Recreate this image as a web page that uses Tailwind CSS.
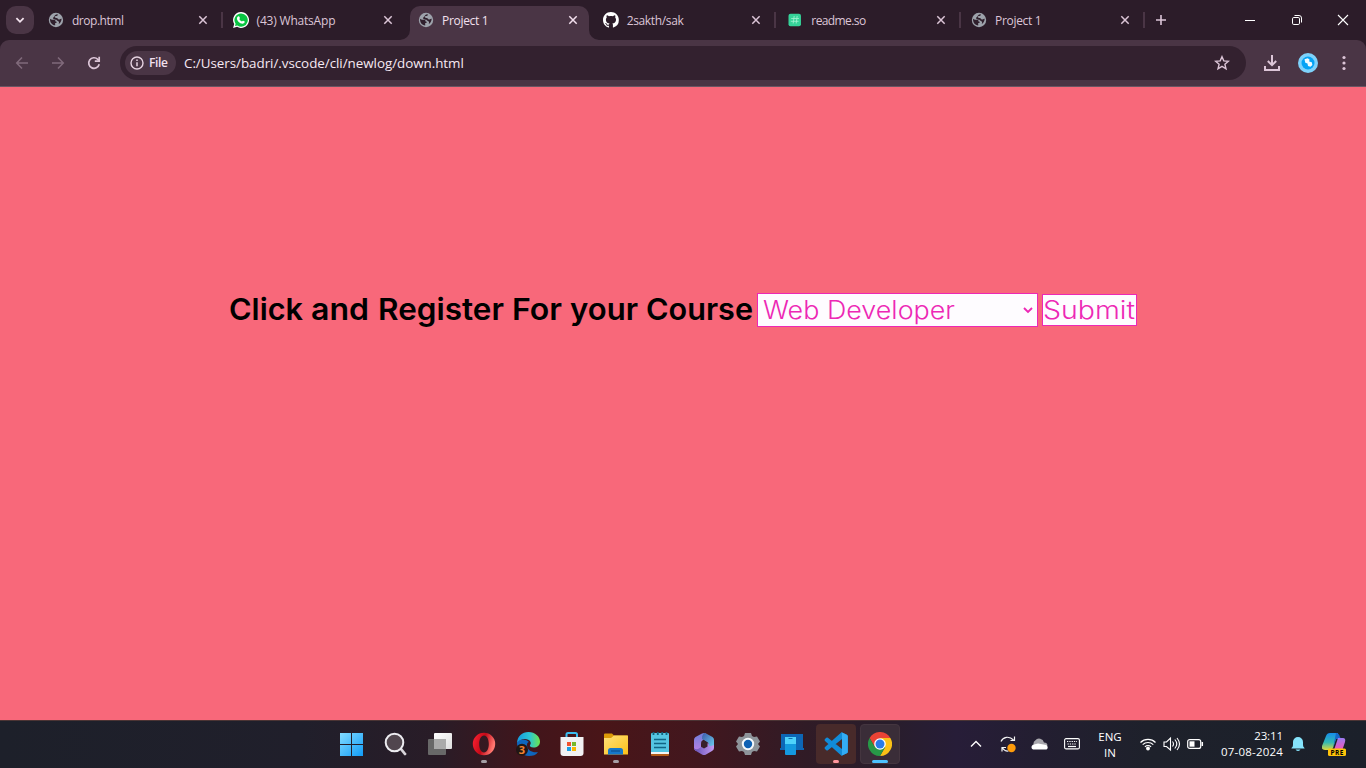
<!DOCTYPE html>
<html lang="en">
<head>
<meta charset="utf-8">
<title>Project 1</title>
<script src="https://cdn.jsdelivr.net/npm/@tailwindcss/browser@4"></script>
</head>
<body class="w-[1366px] h-[768px] overflow-hidden flex flex-col bg-[#f8687a] font-['Open_Sans','Noto_Sans',sans-serif]">
<svg class="hidden">
  <symbol id="globe" viewBox="0 0 16 16"><circle cx="8" cy="8" r="7.2" fill="#9da2ab"/><path d="M2 6.700C3.300 8 4.600 7.600 6 7.700c1.200.1 1.700.9 1.500 1.900l1.200.1c.3 1-.5 1.500-1.500 1.400v2.300C4 13 1.800 10.500 2 6.700ZM9.800 2.300c.1 1-.3 1.600-1.300 1.600-1.400-.1-1.800.5-1.600 1.300.7 1 1.600.4 2.600 1 .5.7 1 1.400 2 1.200.8-.1 1.300-.7 2.200-.7-.2 2.700-1.300 4.500-3 5.400.8-1.500.3-2.600-.7-3-.8-.3-1.300-.6-1.500-1.300-1-.2-2.300-.1-3.200-1.100-.6-.7.1-1.400.9-1.600.2-1.200.9-2.100 1.900-2.700Z" fill="#30202d"/></symbol>
  <symbol id="x" viewBox="0 0 10 10"><path d="M1.300 1.300 8.700 8.700M8.700 1.300 1.300 8.700" stroke="currentColor" stroke-width="1.500" fill="none"/></symbol>
</svg>

<header class="h-[87px] shrink-0 bg-[#2c1c29] text-[#dcc5d7]">
  <div class="h-10 flex items-center">
    <div class="ml-1.5 w-7 h-7 rounded-[10px] bg-[#4a3545] flex items-center justify-center"><svg class="w-2.5 h-2.5" viewBox="0 0 10 10"><path d="m1.400 3.200 3.600 3.600 3.600-3.600" stroke="#f3e3ee" stroke-width="1.800" fill="none"/></svg></div>
    <div class="ml-1 w-[1110px] h-10 flex text-[12px]">
      <div class="w-[184.6px] flex items-center pl-[10px]"><svg class="w-4 h-4"><use href="#globe"/></svg><span class="ml-2 pt-0.5 w-[127px] whitespace-nowrap tracking-[-.45px]">drop.html</span><svg class="w-2.5 h-2.5"><use href="#x"/></svg><i class="ml-[12.5px] w-0.5 h-4 bg-[#4a3545]"></i></div>
      <div class="w-[184.6px] flex items-center pl-[10px]"><svg class="w-4 h-4" viewBox="0 0 16 16"><path d="M8 .1A7.900 7.900 0 0 0 1.200 12L.1 15.900l4-1.100A7.900 7.900 0 1 0 8 .1Z" fill="#fff"/><path d="M8 1.400a6.600 6.600 0 0 0-5.400 10.300L2 14l2.400-.6A6.600 6.600 0 1 0 8 1.400Z" fill="#08c441"/><path d="M5.400 4.200c.5-.2.8 0 1 .6l.5 1.100c.1.4-.5.9-.6 1.100.5 1.200 1.400 2 2.700 2.600.4-.2.7-.9 1.100-.8l1.600.8c.2.6-.3 2-2 2.100-3.200 0-6.200-3.400-5.700-5.700.1-.8.7-1.500 1.400-1.800Z" fill="#fff"/></svg><span class="ml-2 pt-0.5 w-[126px] whitespace-nowrap tracking-[-.2px]">(43) WhatsApp</span><svg class="w-2.5 h-2.5"><use href="#x"/></svg></div>
      <div class="w-[184.6px] flex items-end"><div class="ml-[2.8px] w-[179px] h-[34px] bg-[#4a3545] rounded-t-[10px] relative flex items-center pb-[6px] pl-[8px] text-[#f3e0ee]">
        <svg class="absolute -left-2.5 bottom-0 w-2.5 h-2.5" viewBox="0 0 10 10"><path d="M10 0v10H0A10 10 0 0 0 10 0Z" fill="#4a3545"/></svg><svg class="absolute -right-2.5 bottom-0 w-2.5 h-2.5" viewBox="0 0 10 10"><path d="M0 0v10h10A10 10 0 0 1 0 0Z" fill="#4a3545"/></svg>
        <svg class="w-4 h-4"><use href="#globe"/></svg><span class="ml-2 pt-0.5 w-[126px] whitespace-nowrap tracking-[-.3px]">Project 1</span><svg class="w-2.5 h-2.5"><use href="#x"/></svg></div></div>
      <div class="w-[184.6px] flex items-center pl-[11px]"><svg class="w-4 h-4" viewBox="0 0 16 16" fill="#fff"><path d="M8 0C3.580 0 0 3.580 0 8c0 3.540 2.290 6.530 5.470 7.590.4.070.55-.17.55-.38 0-.19-.01-.82-.01-1.490-2.010.37-2.530-.49-2.690-.94-.09-.23-.48-.94-.82-1.130-.28-.15-.68-.52-.01-.53.63-.01 1.080.58 1.230.82.72 1.210 1.870.87 2.330.66.070-.52.28-.87.51-1.070-1.780-.2-3.640-.89-3.640-3.950 0-.87.31-1.590.82-2.150-.08-.2-.36-1.020.08-2.120 0 0 .67-.21 2.200.82.64-.18 1.320-.27 2-.27s1.360.09 2 .27c1.530-1.040 2.200-.82 2.200-.82.44 1.100.16 1.920.08 2.120.51.56.82 1.270.82 2.150 0 3.070-1.870 3.750-3.650 3.950.29.25.54.73.54 1.480 0 1.070-.01 1.930-.01 2.200 0 .21.15.46.55.38A8.010 8.010 0 0 0 16 8c0-4.420-3.580-8-8-8Z"/></svg><span class="ml-2 pt-0.5 w-[126px] whitespace-nowrap tracking-[-.35px]">2sakth/sak</span><svg class="w-2.5 h-2.5"><use href="#x"/></svg><i class="ml-[13px] w-0.5 h-4 bg-[#4a3545]"></i></div>
      <div class="w-[184.6px] flex items-center pl-[11px]"><svg class="w-4 h-4" viewBox="0 0 16 16"><rect x="1.500" y="1.700" width="12.500" height="12.500" rx="2" fill="#35d399"/><path d="m7.200 4-1 7.500M10.200 4l-1 7.500M4.200 6.500h7.800M3.800 9.300h7.800" stroke="#9af2cf" stroke-width=".9"/></svg><span class="ml-2 pt-0.5 w-[125px] whitespace-nowrap tracking-[-.6px]">readme.so</span><svg class="w-2.5 h-2.5"><use href="#x"/></svg><i class="ml-[13px] w-0.5 h-4 bg-[#4a3545]"></i></div>
      <div class="w-[184.6px] flex items-center pl-[10px]"><svg class="w-4 h-4"><use href="#globe"/></svg><span class="ml-2 pt-0.5 w-[125px] whitespace-nowrap tracking-[-.3px]">Project 1</span><svg class="w-2.5 h-2.5"><use href="#x"/></svg><i class="ml-[13px] w-0.5 h-4 bg-[#4a3545]"></i></div>
    </div>
    <svg class="ml-[7px] w-3 h-3" viewBox="0 0 12 12"><path d="M6 1v10M1 6h10" stroke="#dcc5d7" stroke-width="1.600"/></svg>
    <div class="ml-auto flex items-center mr-[17px] text-white">
      <svg class="w-2.5 h-3" viewBox="0 0 10 12"><path d="M0 6.500h10" stroke="white"/></svg>
      <svg class="w-3 h-3 ml-9 mr-[34px]" viewBox="0 0 12 12" fill="none" stroke="white"><rect x="1.500" y="3.500" width="7" height="7" rx="1.300"/><path d="M3.500 1.500H8a2.500 2.500 0 0 1 2.500 2.500v4.500"/></svg>
      <svg class="w-3 h-3" viewBox="0 0 12 12"><path d="m1 1 10 10M11 1 1 11" stroke="white" stroke-width="1.100"/></svg>
    </div>
  </div>
  <div class="h-[47px] bg-[#4a3545] rounded-t-[9px] border-b border-[#695563] flex items-center">
    <svg class="ml-[15px] w-3.5 h-3.5" viewBox="0 0 14 14" fill="none" stroke="#806a7b" stroke-width="1.500"><path d="M13 7H2M7 1.500 1.700 7 7 12.500"/></svg>
    <svg class="ml-[22px] w-3.5 h-3.5" viewBox="0 0 14 14" fill="none" stroke="#806a7b" stroke-width="1.500"><path d="M1 7h11M7 1.500 12.300 7 7 12.500"/></svg>
    <svg class="ml-[22px] w-3.5 h-3.5" viewBox="0 0 14 14" fill="none" stroke="#dcc5d7" stroke-width="1.700"><path d="M12.200 8.300a5.300 5.300 0 1 1-1.400-5L12 4.500"/><path d="M12.200.8v4.400H7.800"/></svg>
    <div class="ml-[19px] w-[1126px] h-[34px] rounded-full bg-[#33212f] flex items-center pl-[5px]">
      <div class="w-[51px] h-6 rounded-full bg-[#4a3545] flex items-center pl-[5px] text-[12px] font-semibold text-[#f3e0ee]"><svg class="w-3.5 h-3.5 mr-[5px]" viewBox="0 0 14 14"><circle cx="7" cy="7" r="6" fill="none" stroke="#e6d3e1" stroke-width="1.400"/><path d="M7 6.200v4M7 3.500v1.500" stroke="#e6d3e1" stroke-width="1.500"/></svg><span class="tracking-[-.4px]">File</span></div>
      <span class="ml-2 text-[13.4px] leading-5 tracking-[-.04px] text-[#f6e9f3]">C:/Users/badri/.vscode/cli/newlog/down.html</span>
      <svg class="ml-auto mr-4 w-4 h-4" viewBox="0 0 16 16"><path d="m8 1.700 1.800 4.200 4.600.4-3.500 3 1.100 4.500L8 11.400l-4 2.400 1.100-4.500-3.500-3 4.600-.4L8 1.700Z" fill="none" stroke="#dcc5d7" stroke-width="1.400"/></svg>
    </div>
    <svg class="ml-[18px] w-4 h-4" viewBox="0 0 16 16" fill="none" stroke="#dcc5d7" stroke-width="2"><path d="M8 0v10M3.800 6 8 10.200 12.200 6M1 11v4h14v-4"/></svg>
    <svg class="ml-[18px] w-5 h-5" viewBox="0 0 20 20"><circle cx="10" cy="10" r="10" fill="#7ed2fb"/><circle cx="10" cy="10" r="6.500" fill="#04a3f5"/><path d="m6.500 6.200 3.200-1 1.800 1.200-.3 2 2.600.8.600 2.800-1.900 1.800-2.500-.7-.5-2.600-2.200-.8Z" fill="#effaff"/></svg>
    <svg class="ml-6 w-1 h-4" viewBox="0 0 4 16" fill="#dcc5d7"><circle cx="2" cy="2.500" r="1.600"/><circle cx="2" cy="8" r="1.600"/><circle cx="2" cy="13.500" r="1.600"/></svg>
  </div>
</header>

<main class="h-[633px] shrink-0 flex items-start pl-[229px] pt-[206px] text-[#ed28b5]">
  <div class="w-[528px] h-8 flex items-center"><svg class="w-[528px] h-8 overflow-visible fill-black font-semibold text-[30px] font-['Inter']"><text y="26.500"><tspan x="0" textLength="74" lengthAdjust="spacingAndGlyphs">Click</tspan> <tspan x="82" textLength="58" lengthAdjust="spacingAndGlyphs">and</tspan> <tspan x="149" textLength="126" lengthAdjust="spacingAndGlyphs">Register</tspan> <tspan x="283" textLength="50" lengthAdjust="spacingAndGlyphs">For</tspan> <tspan x="341" textLength="68" lengthAdjust="spacingAndGlyphs">your</tspan> <tspan x="417" textLength="107" lengthAdjust="spacingAndGlyphs">Course</tspan></text></svg></div>
  <div class="w-[281px] h-[34px] bg-[#fefcff] border border-[#ed28b5] flex items-center"><svg class="w-[260px] h-8"><text x="5" y="25" textLength="192" lengthAdjust="spacingAndGlyphs" class="fill-[#ed28b5] font-light text-[25px] font-['Inter']">Web Developer</text></svg><svg class="ml-[5px] w-2.5 h-2.5 shrink-0" viewBox="0 0 10 10"><path d="m1 3 4 4 4-4" fill="none" stroke="#ed28b5" stroke-width="1.900"/></svg></div>
  <div class="ml-1 mt-px w-[95px] h-8 bg-[#fefcff] border border-[#ed28b5]"><svg class="w-[93px] h-[30px]"><text x="0" y="24" textLength="92" lengthAdjust="spacingAndGlyphs" class="fill-[#ed28b5] font-light text-[25px] font-['Inter']">Submit</text></svg></div>
</main>

<footer class="h-12 pb-0.5 shrink-0 border-t border-[#4b3434] flex items-center bg-[linear-gradient(90deg,#1d202a_0%,#201f2b_22%,#291c27_32%,#42151b_39%,#491518_44%,#42171e_51%,#301b26_59%,#291d2b_65%,#271d38_70%,#231e31_76%,#1e212b_84%,#1b202a_100%)] text-white">
  <div class="ml-[330px] w-[572px] h-full flex items-center">
    <div class="w-11 flex justify-center"><svg class="w-6 h-6" viewBox="0 0 24 24"><defs><linearGradient id="w" x1="0" y1="0" x2="1" y2="1"><stop stop-color="#83dcff"/><stop offset="1" stop-color="#109cf7"/></linearGradient></defs><path d="M0 1h11v11H0zM12 1h11v11H12zM0 13h11v11H0zM12 13h11v11H12z" fill="url(#w)"/></svg></div>
    <div class="w-11 flex justify-center"><svg class="w-6 h-6" viewBox="0 0 24 24"><path d="m17 17 4 5" stroke="#d8d5da" stroke-width="2.800" stroke-linecap="round"/><circle cx="10.500" cy="10.500" r="8.800" fill="#51464e" stroke="#ececf0" stroke-width="2"/></svg></div>
    <div class="w-11 flex justify-center"><svg class="w-6 h-6" viewBox="0 0 24 24"><defs><linearGradient id="tv" x1="0" x2="1" y2="1"><stop stop-color="#fff"/><stop offset="1" stop-color="#ddd"/></linearGradient></defs><rect x="6" y="1" width="18" height="16" rx="1" fill="url(#tv)"/><rect y="7" width="18" height="16" rx="1" fill="#686868"/><path d="M6 7h12v10H6z" fill="#aaa"/></svg></div>
    <div class="w-11 h-full flex items-center justify-center relative"><svg class="w-6 h-6" viewBox="0 0 24 24"><defs><linearGradient id="op" x2="1" y2=".3"><stop stop-color="#ff2435"/><stop offset=".55" stop-color="#c40917"/><stop offset="1" stop-color="#ff7770"/></linearGradient></defs><path fill-rule="evenodd" d="M12 .8a11.200 11.200 0 1 0 0 22.400A11.200 11.200 0 0 0 12 .8Zm0 2.700c3 0 4.800 3.700 4.800 8.500s-1.800 8.500-4.800 8.500S7.200 16.800 7.200 12 9 3.500 12 3.500Z" fill="url(#op)"/></svg><i class="absolute bottom-[3px] w-1.5 h-[3px] rounded-full bg-[#a69fa5]"></i></div>
    <div class="w-11 flex justify-center"><svg class="w-6 h-6 overflow-visible" viewBox="0 0 24 24"><defs><linearGradient id="ed" x2="1"><stop stop-color="#1599df"/><stop offset=".55" stop-color="#2bc5d3"/><stop offset="1" stop-color="#6ce54c"/></linearGradient></defs><path d="M1 11c0 8 5 13 12 13 4 0 7-1 9-4-5 1-10-1-11-6-.3-3 1-4 2-4C9 6 2 7 1 11Z" fill="#0e65bd"/><path d="M1 11C1.500 4 6 0 12.500 0 19 0 24 4.500 24 9.500c0 4-3 6-6.500 6-3 0-4-1.500-3.500-2.500C16 11 14 7 9 7c-4 0-7 2-8 4Z" fill="url(#ed)"/><circle cx="6" cy="17.800" r="6" fill="#201614"/><text x="2.800" y="22" class="fill-[#f2812e] font-bold text-[11px]">3</text></svg></div>
    <div class="w-11 flex justify-center"><svg class="w-6 h-6" viewBox="0 0 24 24"><path d="M6.500 6V2.500c0-1 .5-1.500 1.500-1.500h7.500c1 0 1.500.5 1.500 1.500V6" fill="none" stroke="#3bbdf0" stroke-width="2"/><path d="M.5 5h23v16c0 2-1 3-3 3h-17c-2 0-3-1-3-3Z" fill="#f1f1f3"/><path fill="#f0522e" d="M7 10h4v4H7z"/><path fill="#77b82b" d="M12 10h4v4h-4z"/><path fill="#199fe5" d="M7 15h4v4H7z"/><path fill="#f8b800" d="M12 15h4v4h-4z"/></svg></div>
    <div class="w-11 h-full flex items-center justify-center relative"><svg class="w-6 h-6" viewBox="0 0 24 24"><defs><linearGradient id="fo" x2="1" y2="1"><stop stop-color="#ffe17a"/><stop offset="1" stop-color="#fbc018"/></linearGradient></defs><path d="M0 2.500q0-1 1-1h7l2 2H24V8H0Z" fill="#dd9b08"/><path d="M0 6h7l3-2.500h13q1 0 1 1V22.500H0Z" fill="url(#fo)"/><path d="M4 22.500v-4q0-2.500 2.500-2.500h10q2.500 0 2.500 2.500v4Z" fill="#1578c9"/><path d="M7 19h9" stroke="#0f5798" stroke-width="1.500"/></svg><i class="absolute bottom-[3px] w-1.5 h-[3px] rounded-full bg-[#a69fa5]"></i></div>
    <div class="w-11 flex justify-center"><svg class="w-6 h-6" viewBox="0 0 24 24"><path d="M3 20h18v3q0 1-1 1H4q-1 0-1-1Z" fill="#b35b18"/><path d="M3 19h18v3H3z" fill="#f4f4f4"/><path d="M3 2q0-1 1-1h16q1 0 1 1v18H3Z" fill="#55c5e2"/><path d="M5.500 0v3M9.800 0v3M14.200 0v3M18.500 0v3" stroke="#12647f" stroke-width="1.800"/><path d="M6 7.500h12M6 11.500h12M6 15.500h12" stroke="#126585" stroke-width="1.600"/></svg></div>
    <div class="w-11 flex justify-center"><svg class="w-6 h-6" viewBox="0 0 24 24"><defs><linearGradient id="m1" x2="0" y2="1"><stop stop-color="#6f7fd9"/><stop offset="1" stop-color="#b77fe4"/></linearGradient><linearGradient id="m2" x2="1" y2="1"><stop stop-color="#3b5aa9"/><stop offset="1" stop-color="#6fd5f2"/></linearGradient><linearGradient id="m3" x2="1"><stop stop-color="#6450b4"/><stop offset="1" stop-color="#c49af2"/></linearGradient></defs><path d="M10 1.500q2-1 4 0L11 8q-2 1.500-2 4v4L4 19q-2-1-2-3V8q0-2 1.500-3Z" fill="url(#m1)"/><path d="M12 1q2 0 3 1l5.500 3Q22 6 22 8v7l-5 2v-4q0-2-2-3l-5-3q0-4 2-6Z" fill="url(#m2)"/><path d="M2 16q1 2 4 1l10-6q1 0 1 2 0 2 5 0v3q0 2-2 3l-6 3.500q-2 1-4 0L4 19q-2-1-2-3Z" fill="url(#m3)"/><path d="m9.500 9.500 2-1.500 4 2.500v4L12 16.500l-2.500-1.500Z" fill="#38202a"/></svg></div>
    <div class="w-11 flex justify-center"><svg class="w-6 h-6" viewBox="0 0 24 24"><path d="M9 1h6l1 3 2 1 3-.6 3 5.100L22 12l2 2.500-3 5.100-3-.6-2 1-1 3H9l-1-3-2-1-3 .6-3-5.100L2 12 0 9.500l3-5.100L6 5l2-1Z" fill="#8e949a"/><circle cx="12" cy="12" r="5.200" fill="#0e61b4" stroke="#f4f7fa" stroke-width="2"/></svg></div>
    <div class="w-11 flex justify-center"><svg class="w-6 h-6" viewBox="0 0 24 24"><path d="M1 2h22v14h1v2H0v-2h1Z" fill="#0d66b5"/><path d="M5 5h11v17q0 1-1 1H6q-1 0-1-1Z" fill="#1499df"/><path d="M5 5h11v7H5z" fill="#4ed2fb"/><path d="M8.500 6.500h4" stroke="#126fae"/></svg></div>
    <div class="w-11 h-full flex items-center justify-center relative"><div class="w-10 h-10 shrink-0 rounded bg-[#482a2a] flex items-center justify-center"><svg class="w-6 h-6" viewBox="0 0 24 24"><path d="m17.500.2 5.300 2.500q1 .5 1 1.500v15.600q0 1-1 1.500l-5.300 2.500L1 9q-1-1 0-2l1.300-1.200q.8-.6 1.600 0L18 17V7L3.900 18.200q-.8.600-1.600 0L1 17q-1-1 0-2Z" fill="#118bd8"/><path d="m17.500.2 5.300 2.500q1 .5 1 1.500v15.600q0 1-1 1.500l-5.300 2.500Q18 23 18 22V2q0-1-.5-1.800Z" fill="#33acf4"/></svg></div><i class="absolute bottom-[3px] w-1.5 h-[3px] rounded-full bg-[#ff969e]"></i></div>
    <div class="w-11 h-full flex items-center justify-center relative"><div class="w-10 h-10 shrink-0 rounded bg-[#3a2d38] border border-[#44353f] flex items-center justify-center"><svg class="w-6 h-6" viewBox="0 0 24 24"><path d="M1.600 6A12 12 0 0 1 22.400 6H12L6.800 15Z" fill="#ea4335"/><path d="M22.400 6A12 12 0 0 1 12 24l5.200-9L12 6Z" fill="#fbc116"/><path d="M12 24A12 12 0 0 1 1.600 6l5.200 9h10.400Z" fill="#279847"/><circle cx="12" cy="12" r="5.800" fill="#fff"/><circle cx="12" cy="12" r="4.500" fill="#287be8"/></svg></div><i class="absolute bottom-[3px] w-4 h-[3px] rounded-full bg-[#4cc2ff]"></i></div>
  </div>
  <svg class="ml-[68px] w-3 h-3" viewBox="0 0 12 12"><path d="M1 8.500 6 3.500l5 5" fill="none" stroke="white" stroke-width="1.400"/></svg>
  <svg class="ml-[17px] w-[18px] h-[18px]" viewBox="0 0 18 18"><path d="M2 6.500C4 2 10 .5 14.500 5M15.500 1.500v4h-4M3 16.500v-4h4M3.500 13c2 3 4 3.300 6 3" fill="none" stroke="#f5f5f5" stroke-width="1.200"/><circle cx="12.500" cy="13" r="4.200" fill="#ff9c0b"/></svg>
  <svg class="ml-[14px] w-[17px] h-4" viewBox="0 0 17 16"><path d="M4 11a4 4 0 0 1 .2-6.500A5 5 0 0 1 13 6.500c3 0 4 2 3 4Z" fill="#a8a7ad"/><path d="M3.500 13.500C-.5 13.500-.3 9 3 8.600L7 7.500l7 1.300c3.500.4 3.500 4.700.5 4.700Z" fill="#fff"/></svg>
  <svg class="ml-4 w-4 h-3" viewBox="0 0 16 12"><rect x=".6" y=".6" width="14.800" height="10.300" rx="1.500" fill="none" stroke="white" stroke-width="1.100"/><path d="M3 3.500h10M3.500 6h9" stroke="white" stroke-width="1.200" stroke-dasharray="1.300 1"/><path d="M4 8.500h8" stroke="white" stroke-width="1.200"/></svg>
  <div class="ml-[15px] pt-0.5 w-[30px] text-center text-[11.5px] leading-4 whitespace-nowrap"><div>ENG</div><div>IN</div></div>
  <svg class="ml-[14px] w-[18px] h-4" viewBox="0 0 18 16" fill="none" stroke="#fff" stroke-width="1.200"><path d="M1.500 6.500a10.500 10.500 0 0 1 15 0M3.700 8.700a7.500 7.500 0 0 1 10.600 0M5.900 10.900a4.500 4.500 0 0 1 6.200 0"/><circle cx="9" cy="12.500" r="1.300" fill="#fff"/></svg>
  <svg class="ml-[6px] w-[18px] h-4" viewBox="0 0 18 16" fill="none" stroke="#fff" stroke-width="1.100"><path d="M1 6h2.500L7.500 2v12L3.500 10.500H1ZM9.500 5.500q2 2.500 0 5M11.800 3.500q4 4.500 0 9M14 2q5 6 0 12"/></svg>
  <svg class="ml-[6px] w-[17px] h-4" viewBox="0 0 17 16"><rect x=".7" y="3.600" width="13" height="8.800" rx="2" fill="none" stroke="white" stroke-width="1.200"/><path d="M2.500 5.300h5v5.400h-5z" fill="white"/><path d="M15.300 6v4" stroke="white" stroke-width="1.500"/></svg>
  <div class="ml-3 w-[67px] text-right text-[11.5px] leading-4 whitespace-nowrap tracking-[.2px]"><div class="tracking-[-.1px]">23:11</div><div>07-08-2024</div></div>
  <svg class="ml-[7px] w-4 h-4" viewBox="0 0 16 16"><path d="M1.500 12q1.500-1 1.500-3V6a5 5 0 0 1 10 0v3q0 2 1.500 3v.5h-13Z" fill="#86e4fc"/><path d="M5.500 13.500h5q-2.500 3-5 0Z" fill="#86e4fc"/></svg>
  <svg class="ml-4 w-6 h-6" viewBox="0 0 24 24"><defs><linearGradient id="c1" x2="0" y2="1"><stop stop-color="#168cea"/><stop offset=".55" stop-color="#32b8b3"/><stop offset="1" stop-color="#dfd93b"/></linearGradient><linearGradient id="c2" x2="0" y2="1"><stop stop-color="#9a7bf2"/><stop offset=".6" stop-color="#e45bc0"/><stop offset="1" stop-color="#ff7b5a"/></linearGradient></defs><path d="M8 1h8l-5 15q-1 2-3 2H3q-4 0-3-4L4 4q1-3 4-3Z" fill="url(#c1)"/><path d="M14 1q3 0 4 4l1 2h-5l-3 9Z" fill="#1667c8"/><path d="M16 6h5q3 0 2 4l-3 9q-1 3-4 3H8q3 0 4-4Z" fill="url(#c2)"/><rect x="6" y="16.500" width="18" height="7.500" rx="1.500" fill="#ffc40b"/><text x="8.500" y="22.800" textLength="13" class="fill-black font-bold text-[6.5px]">PRE</text></svg>
</footer>
</body>
</html>
